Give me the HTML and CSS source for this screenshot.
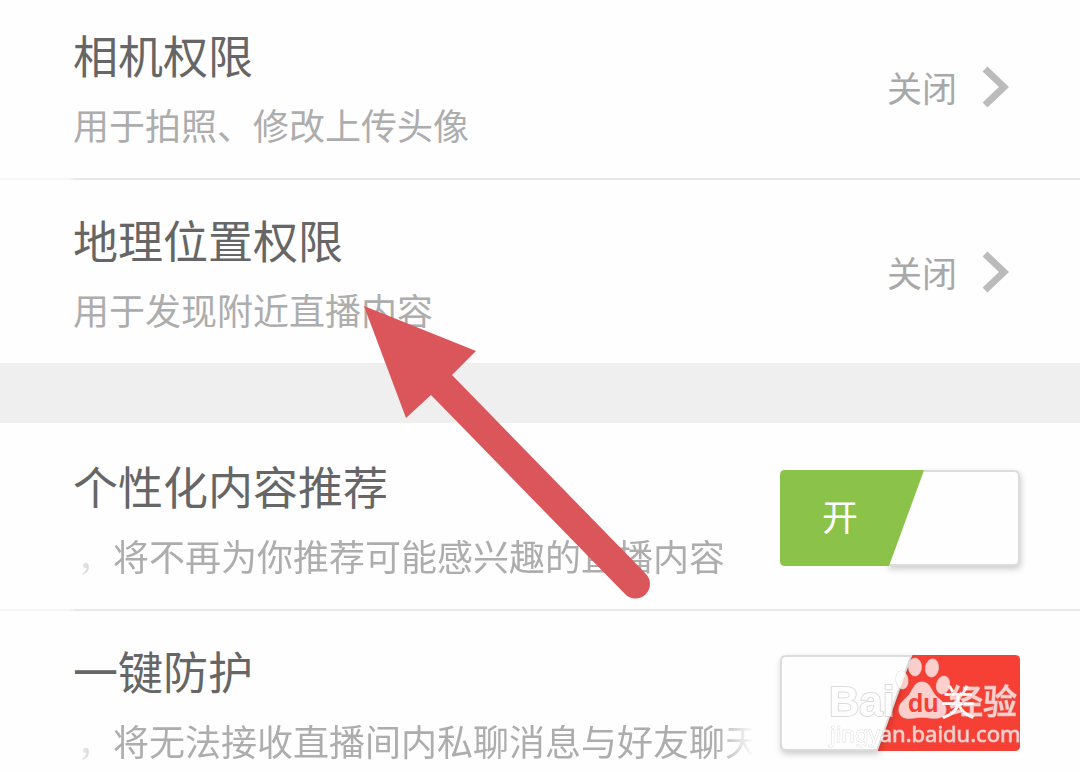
FILE: index.html
```html
<!DOCTYPE html>
<html lang="zh-CN">
<head>
    <meta charset="utf-8">
    <meta name="viewport" content="width=device-width, initial-scale=1">
    <title>权限设置</title>
    <link rel="stylesheet" href="styles.css">
</head>
<body>
    <main class="settings">
        <section class="group group-first">
            <div class="row">
                <div class="info">
                    <h2 class="title">相机权限</h2>
                    <p class="desc">用于拍照、修改上传头像</p>
                </div>
                <button class="status" type="button">
                    <span>关闭</span>
                    <svg class="chevron" viewBox="0 0 28 44"><path d="M4 4 L23 22 L4 40"/></svg>
                </button>
            </div>
            <div class="row">
                <div class="info">
                    <h2 class="title">地理位置权限</h2>
                    <p class="desc">用于发现附近直播内容</p>
                </div>
                <button class="status" type="button">
                    <span>关闭</span>
                    <svg class="chevron" viewBox="0 0 28 44"><path d="M4 4 L23 22 L4 40"/></svg>
                </button>
            </div>
        </section>

        <section class="group group-second">
            <div class="row">
                <div class="info">
                    <h2 class="title"><label for="recommend">个性化内容推荐</label></h2>
                    <p class="desc marquee">，将不再为你推荐可能感兴趣的直播内容</p>
                </div>
                <label class="switch">
                    <input type="checkbox" id="recommend" checked>
                    <svg class="switch-bg" viewBox="0 0 240 96">
                        <path class="thumb" d="M143 1 H234 Q239 1 239 6 V90 Q239 95 234 95 H108 Z"/>
                        <path class="fill-on" d="M5 0 H144 L109 96 H5 Q0 96 0 91 V5 Q0 0 5 0 Z"/>
                    </svg>
                    <span class="switch-text">开</span>
                </label>
            </div>
            <div class="row">
                <div class="info">
                    <h2 class="title"><label for="protect">一键防护</label></h2>
                    <p class="desc marquee">，将无法接收直播间内私聊消息与好友聊天</p>
                </div>
                <label class="switch switch-off">
                    <input type="checkbox" id="protect">
                    <svg class="switch-bg" viewBox="0 0 240 96">
                        <path class="fill-off" d="M131 0 H235 Q240 0 240 5 V91 Q240 96 235 96 H96 Z"/>
                        <path class="thumb" d="M6 1 H131 L97 95 H6 Q1 95 1 90 V6 Q1 1 6 1 Z"/>
                    </svg>
                    <span class="switch-text">关</span>
                </label>
            </div>
        </section>

        <!-- pointer to the location permission -->
        <svg class="arrow" viewBox="0 0 290 296">
            <path d="M0 0 L112 45 L88 69 L282 268 A14.5 14.5 0 0 1 261 288 L67 89 L42 112 Z"/>
        </svg>

        <svg class="watermark" viewBox="0 0 200 100">
            <g class="mark">
                <text class="bai" x="6" y="62">Bai</text>
                <text class="jingyan" x="126" y="60">经验</text>
                <text class="url" x="7" y="88">jingyan.baidu.com</text>
                <ellipse cx="79" cy="26" rx="6" ry="9" transform="rotate(-8 79 26)"/>
                <ellipse cx="92" cy="13" rx="6.5" ry="9"/>
                <ellipse cx="109" cy="14" rx="6.5" ry="9" transform="rotate(8 109 14)"/>
                <ellipse cx="120" cy="31" rx="6.5" ry="9" transform="rotate(14 120 31)"/>
                <path d="M99 28 C91 28 90 36 86 41 C81 46 75 50 76 57 C77 65 85 65 91 64 C96 63 102 63 107 64 C114 65 123 64 123 56 C123 49 117 46 112 41 C108 36 107 28 99 28 Z"/>
            </g>
            <text class="du" x="85" y="58">du</text>
        </svg>
    </main>
</body>
</html>
```
FILE: styles.css
```css
* {
    box-sizing: border-box;
}
body {
    margin: 0;
    background-color: #efefef;
    font-family: "Noto Sans CJK SC", sans-serif;
}
.settings {
    position: relative;
    height: 100vh;
    overflow: hidden;
}
.group {
    background-color: #fefefe;
}
.group-second {
    margin-top: 60px;
    padding-top: 3px;
}
.row {
    display: flex;
    align-items: center;
    justify-content: space-between;
    padding: 30px 60px 30px 73px;
}
/* the list is scrolled a little under the header */
.group-first {
    margin-top: -5px;
}
.row + .row {
    border-top: 2px solid #e8e8e8;
    border-image: linear-gradient(to right, #f6f6f6 70px, #e8e8e8 76px) 1;
}
.info {
    flex: 1;
    max-width: 680px;
    min-width: 0;
}
.title {
    margin: 0 0 15px;
    font-size: 45px;
    font-weight: 400;
    line-height: 60px;
    color: #666;
}
.desc {
    margin: 0;
    font-size: 36px;
    font-weight: 400;
    line-height: 48px;
    color: #adadad;
    white-space: nowrap;
}
.marquee {
    padding-left: 4px;
    overflow: hidden;
    -webkit-mask-image: linear-gradient(to right, transparent, #000 36px, #000 calc(100% - 36px), transparent);
    mask-image: linear-gradient(to right, transparent, #000 36px, #000 calc(100% - 36px), transparent);
}
.status {
    display: flex;
    align-items: center;
    gap: 24px;
    padding: 0 11px 0 0;
    border: none;
    background: none;
    font-family: inherit;
    font-size: 35px;
    font-weight: 400;
    line-height: 48px;
    color: #a8a8a8;
    cursor: pointer;
}
.chevron {
    width: 28px;
    height: 44px;
    fill: none;
    stroke: #bbb;
    stroke-width: 7;
}

/* switches */
.switch {
    position: relative;
    display: grid;
    width: 240px;
    cursor: pointer;
}
.switch input {
    position: absolute;
    inset: 0;
    margin: 0;
    opacity: 0;
}
.switch-bg,
.switch-text {
    grid-area: 1 / 1;
}
.switch-bg {
    width: 240px;
    height: 96px;
    overflow: visible;
}
.thumb {
    fill: #fefefe;
    stroke: #dcdcdc;
    stroke-width: 2;
    filter: drop-shadow(1px 3px 3px rgba(0, 0, 0, 0.2));
}
.fill-on {
    fill: #8bc34a;
}
.fill-off {
    fill: #f64035;
}
.switch-text {
    position: relative;
    align-self: center;
    padding: 0 0 6px 42px;
    font-size: 36px;
    line-height: 48px;
    color: #fff;
}
.switch-off .switch-text {
    padding-left: 160px;
}

.arrow {
    position: absolute;
    left: 364px;
    top: 306px;
    width: 290px;
    height: 296px;
    fill: #db565b;
}

.watermark {
    position: absolute;
    right: 57px;
    bottom: 18px;
    width: 200px;
    height: 100px;
    overflow: visible;
}
.mark {
    fill: #fff;
    stroke: #d0d0d0;
    stroke-width: 2;
    paint-order: stroke;
    opacity: 0.75;
}
.mark ellipse,
.mark path {
    stroke-width: 1;
}
.bai {
    font: bold 42px "Liberation Sans", sans-serif;
}
.du {
    font: bold 25px "Liberation Sans", sans-serif;
    fill: #f64035;
}
.jingyan {
    font-size: 34px;
    font-weight: 500;
    stroke-width: 1;
}
.url {
    font: 22px "Noto Sans", sans-serif;
    stroke-width: 1;
}
```
